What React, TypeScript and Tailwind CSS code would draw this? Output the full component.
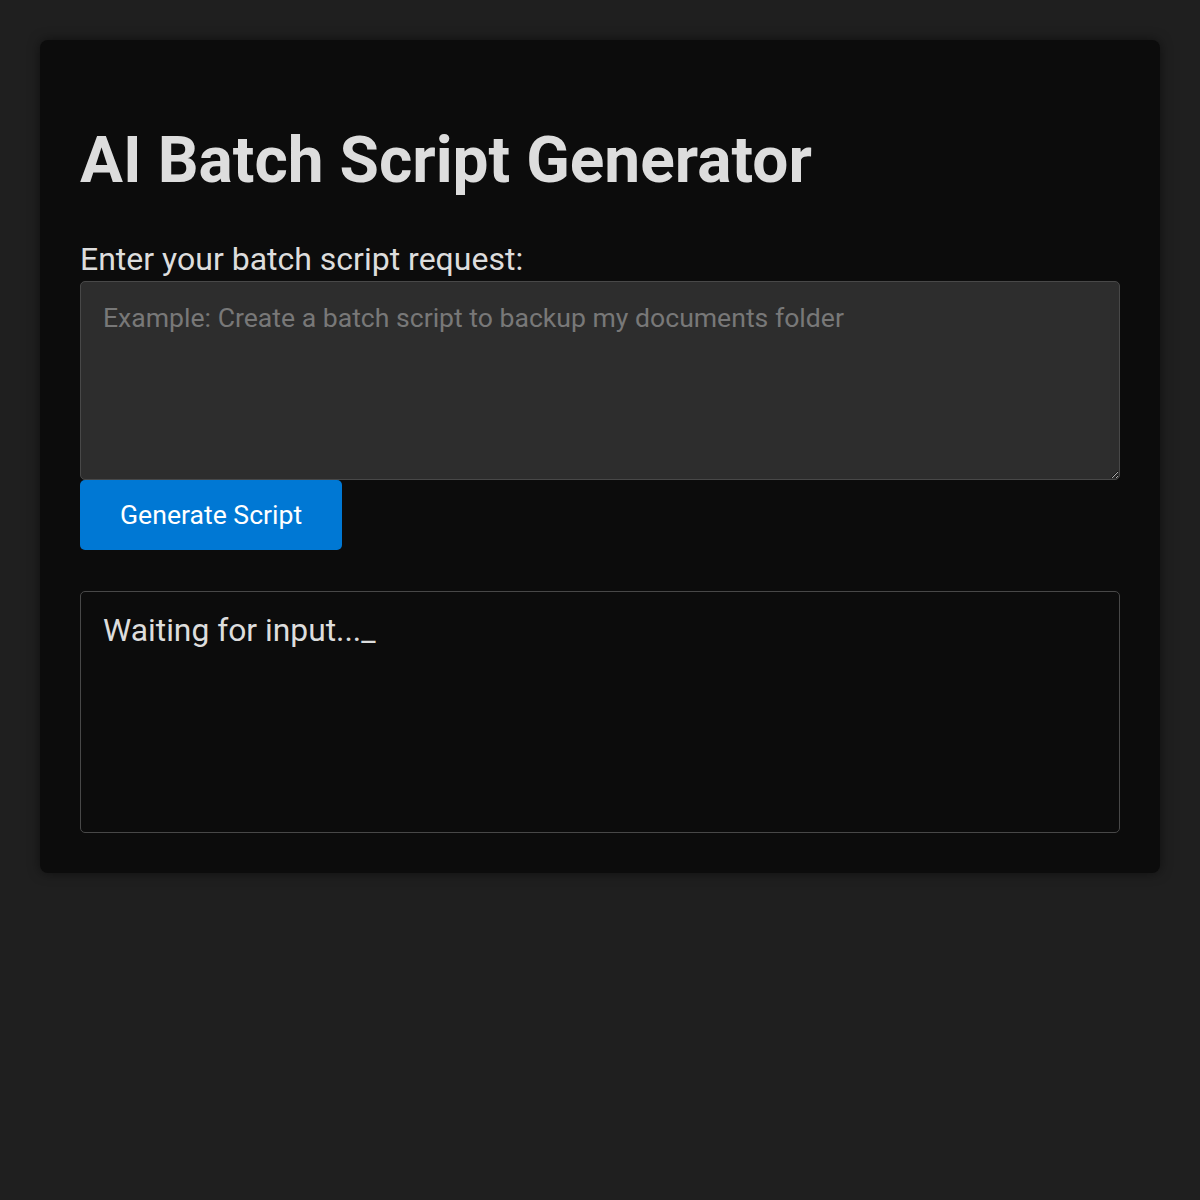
import { useState } from 'react'

export default function App() {
  const [request, setRequest] = useState('')
  const [output, setOutput] = useState('Waiting for input..._')

  const handleGenerate = () => {
    if (!request.trim()) return
    setOutput('Generating script..._')
  }

  return (
    <div className="min-h-[1200px] bg-[#1f1f1f] p-10 font-['Roboto',sans-serif] text-[#dddddd]">
      <div className="rounded-lg bg-[#0c0c0c] p-10 shadow-[0_0_12px_rgba(0,0,0,0.5)]">
        <h1 className="my-[43px] text-[64px] font-bold leading-[1.172] text-[#dddddd]">
          AI Batch Script Generator
        </h1>
        <label htmlFor="request" className="mt-[2px] mb-[2px] block text-[32px] leading-[1.172]">
          Enter your batch script request:
        </label>
        <textarea
          id="request"
          value={request}
          onChange={(e) => setRequest(e.target.value)}
          placeholder="Example: Create a batch script to backup my documents folder"
          className="block h-[199px] w-full rounded-[5px] border border-[#484848] bg-[#2d2d2d] py-5 pr-5 pl-[22px] text-[26.6px] leading-[1.172] text-[#dddddd] outline-none [color-scheme:dark] placeholder:text-[#787878]"
        />
        <button
          onClick={handleGenerate}
          className="block h-[70px] rounded-[5px] bg-[#0078d4] px-10 text-[26.6px] text-white"
        >
          Generate Script
        </button>
        <div className="mt-[41px] min-h-[242px] rounded-[5px] border border-[#484848] py-5 pr-5 pl-[22px] text-[31.8px] leading-[1.172] whitespace-pre-wrap">
          {output}
        </div>
      </div>
    </div>
  )
}
